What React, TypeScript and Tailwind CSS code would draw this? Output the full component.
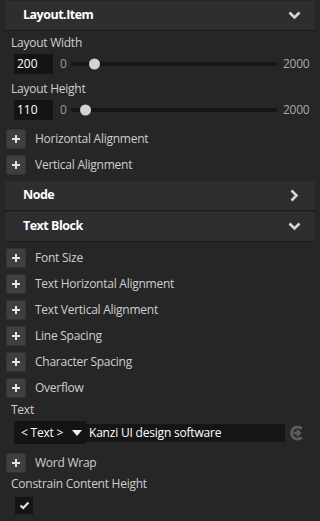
import React from "react";

const font = { fontFamily: '"Open Sans", "Noto Sans", sans-serif' };

function Header({ title, open }: { title: string; open: boolean }) {
  return (
    <div className="mx-[5px] h-[30px] bg-[#2e2e2e] border-b border-[#1b1b1b] flex items-center justify-between pl-[18px] pr-[14px]">
      <span className="text-[12.5px] font-bold text-white tracking-[-0.5px]">{title}</span>
      {open ? (
        <svg width="13" height="9" viewBox="0 0 13 9">
          <path d="M1.5 1.5 L6.5 6.5 L11.5 1.5" stroke="#d6d6d6" strokeWidth="2.6" fill="none" />
        </svg>
      ) : (
        <svg width="9" height="13" viewBox="0 0 9 13" className="mr-[2px]">
          <path d="M1.5 1.5 L6.5 6.5 L1.5 11.5" stroke="#d6d6d6" strokeWidth="2.6" fill="none" />
        </svg>
      )}
    </div>
  );
}

function PlusRow({ label, className = "" }: { label: string; className?: string }) {
  return (
    <div className={"flex items-center h-5 pl-[6px] " + className}>
      <div className="w-5 h-5 rounded-[2px] bg-[#3f3f3f] border border-[#333333] flex items-center justify-center">
        <svg width="10" height="10" viewBox="0 0 10 10">
          <path d="M5 1 V9 M1 5 H9" stroke="#e4e4e4" strokeWidth="2" />
        </svg>
      </div>
      <span className="ml-[9px] text-[12px] tracking-[-0.25px] text-[#cfcfcf]">{label}</span>
    </div>
  );
}

function SliderRow({ value, pos, className = "" }: { value: string; pos: number; className?: string }) {
  return (
    <div className={"flex items-center h-5 pl-[14px] " + className}>
      <div className="w-[39px] h-5 bg-[#141414] text-white text-[12px] flex items-center pl-[3px]">{value}</div>
      <span className="ml-[7px] text-[12px] text-[#9a9a9a]">0</span>
      <div className="relative ml-[4px] w-[206px] h-[4px] rounded-full bg-[#151515]">
        <div
          className="absolute top-1/2 w-[11px] h-[11px] rounded-full bg-[#d4d4d4]"
          style={{ left: pos - 5.5, transform: "translateY(-50%)" }}
        />
      </div>
      <span className="ml-[6px] text-[12px] tracking-[-0.2px] text-[#a8a8a8]">2000</span>
    </div>
  );
}

function Label({ text, className = "" }: { text: string; className?: string }) {
  return (
    <div className={"h-4 flex items-center pl-[11px] text-[12px] tracking-[-0.25px] text-[#cfcfcf] " + className}>
      {text}
    </div>
  );
}

export default function App() {
  return (
    <div className="w-[320px] h-[521px] bg-[#262626] overflow-hidden pt-px" style={font}>
      <Header title="Layout.Item" open />
      <Label text="Layout Width" className="mt-[4px]" />
      <SliderRow value="200" pos={24} className="mt-[3px]" />
      <Label text="Layout Height" className="mt-[7px]" />
      <SliderRow value="110" pos={15} className="mt-[3px]" />
      <PlusRow label="Horizontal Alignment" className="mt-[9px]" />
      <PlusRow label="Vertical Alignment" className="mt-[6px]" />
      <div className="mt-[6px]">
        <Header title="Node" open={false} />
      </div>
      <div className="mt-px">
        <Header title="Text Block" open />
      </div>
      <PlusRow label="Font Size" className="mt-[6px]" />
      <PlusRow label="Text Horizontal Alignment" className="mt-[6px]" />
      <PlusRow label="Text Vertical Alignment" className="mt-[6px]" />
      <PlusRow label="Line Spacing" className="mt-[6px]" />
      <PlusRow label="Character Spacing" className="mt-[6px]" />
      <PlusRow label="Overflow" className="mt-[6px]" />
      <Label text="Text" className="mt-[4px]" />
      <div className="mt-[3px] flex items-center h-[23px] pl-[14px]">
        <div className="w-[72px] h-[23px] bg-[#141414] flex items-center pl-[7px] text-[12px] tracking-[-0.2px] text-white">
          <span>&lt; Text &gt;</span>
          <svg width="10" height="6" viewBox="0 0 10 6" className="ml-[9px]">
            <path d="M0 0 H10 L5 6 Z" fill="#f0f0f0" />
          </svg>
        </div>
        <div className="w-[199px] h-[18px] bg-[#151515] flex items-center pl-[3px] text-[12px] tracking-[-0.2px] text-white">
          Kanzi UI design software
        </div>
        <svg width="16" height="16" viewBox="0 0 16 16" className="ml-[4px]">
          <path d="M12.8 3.8 A6 6 0 1 0 12.8 12.2" stroke="#5c5c5c" strokeWidth="3" fill="none" />
          <path d="M4.5 8 H10.5 M8 5 L11 8 L8 11" stroke="#5c5c5c" strokeWidth="2.4" fill="none" />
        </svg>
      </div>
      <PlusRow label="Word Wrap" className="mt-[9px]" />
      <Label text="Constrain Content Height" className="mt-[3px]" />
      <div className="mt-[5px] ml-[15px] w-[18px] h-[17px] bg-[#141414] flex items-center justify-center">
        <svg width="11" height="9" viewBox="0 0 11 9">
          <path d="M1.5 4.5 L4.2 7 L9.5 1.5" stroke="#e8e8e8" strokeWidth="2" fill="none" />
        </svg>
      </div>
    </div>
  );
}
